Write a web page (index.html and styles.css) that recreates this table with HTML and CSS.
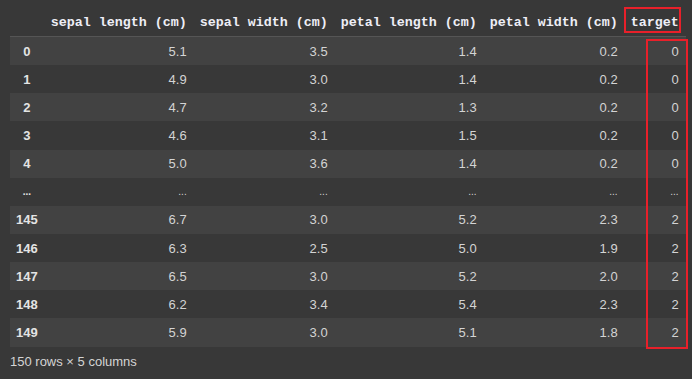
FILE: index.html
```html
<!DOCTYPE html>
<html lang="en">
  <head>
    <meta charset="UTF-8" />
    <title>iris dataframe</title>
    <link rel="stylesheet" href="styles.css">
  </head>
  <body>
    <div class="frame">
      <table class="df">
        <thead>
          <tr>
            <th class="idx"></th>
            <th>sepal length (cm)</th>
            <th>sepal width (cm)</th>
            <th>petal length (cm)</th>
            <th>petal width (cm)</th>
            <th>target</th>
          </tr>
        </thead>
        <tbody>
          <tr><th class="idx">0</th><td>5.1</td><td>3.5</td><td>1.4</td><td>0.2</td><td>0</td></tr>
          <tr><th class="idx">1</th><td>4.9</td><td>3.0</td><td>1.4</td><td>0.2</td><td>0</td></tr>
          <tr><th class="idx">2</th><td>4.7</td><td>3.2</td><td>1.3</td><td>0.2</td><td>0</td></tr>
          <tr><th class="idx">3</th><td>4.6</td><td>3.1</td><td>1.5</td><td>0.2</td><td>0</td></tr>
          <tr><th class="idx">4</th><td>5.0</td><td>3.6</td><td>1.4</td><td>0.2</td><td>0</td></tr>
          <tr class="gap"><th class="idx">...</th><td>...</td><td>...</td><td>...</td><td>...</td><td>...</td></tr>
          <tr><th class="idx">145</th><td>6.7</td><td>3.0</td><td>5.2</td><td>2.3</td><td>2</td></tr>
          <tr><th class="idx">146</th><td>6.3</td><td>2.5</td><td>5.0</td><td>1.9</td><td>2</td></tr>
          <tr><th class="idx">147</th><td>6.5</td><td>3.0</td><td>5.2</td><td>2.0</td><td>2</td></tr>
          <tr><th class="idx">148</th><td>6.2</td><td>3.4</td><td>5.4</td><td>2.3</td><td>2</td></tr>
          <tr><th class="idx">149</th><td>5.9</td><td>3.0</td><td>5.1</td><td>1.8</td><td>2</td></tr>
        </tbody>
      </table>
      <p class="shape">150 rows × 5 columns</p>

      <div class="mark mark-head"></div>
      <div class="mark mark-col"></div>
    </div>
  </body>
</html>
```

FILE: styles.css
```css
html,
body {
  background-color: #383838;
}
body {
  margin: 0;
  padding: 8px 9px 0 10px;
  font-family: "Liberation Sans", Arial, sans-serif;
  color: #d4d4d4;
}
.frame {
  position: relative;
}
.df {
  border-collapse: collapse;
  font-size: 13px;
}
.df thead th {
  height: 28px;
  padding: 0 7px 0 6px;
  font-family: "Liberation Mono", monospace;
  font-size: 13.33px;
  font-weight: bold;
  color: #eeeef6;
  text-align: right;
  white-space: nowrap;
  border-bottom: 1px solid #555;
}
.df tbody tr:nth-child(odd) {
  background-color: #424242;
}
.df td,
.df tbody th {
  height: 28.15px;
  padding: 0 7px 0 6px;
  text-align: right;
}
.df .idx {
  width: 20px;
  text-align: center;
  font-weight: bold;
  color: #e4e4e4;
}
.df .gap td,
.df .gap th {
  font-size: 10px;
}
.shape {
  margin: 7px 0 0;
  font-size: 13px;
  color: #d4d4d4;
}
.mark {
  position: absolute;
  border: 2px solid #e8202a;
}
.mark-head {
  left: 614px;
  top: -1px;
  width: 53px;
  height: 22px;
}
.mark-col {
  left: 636px;
  top: 31px;
  width: 38px;
  height: 306px;
}
```
